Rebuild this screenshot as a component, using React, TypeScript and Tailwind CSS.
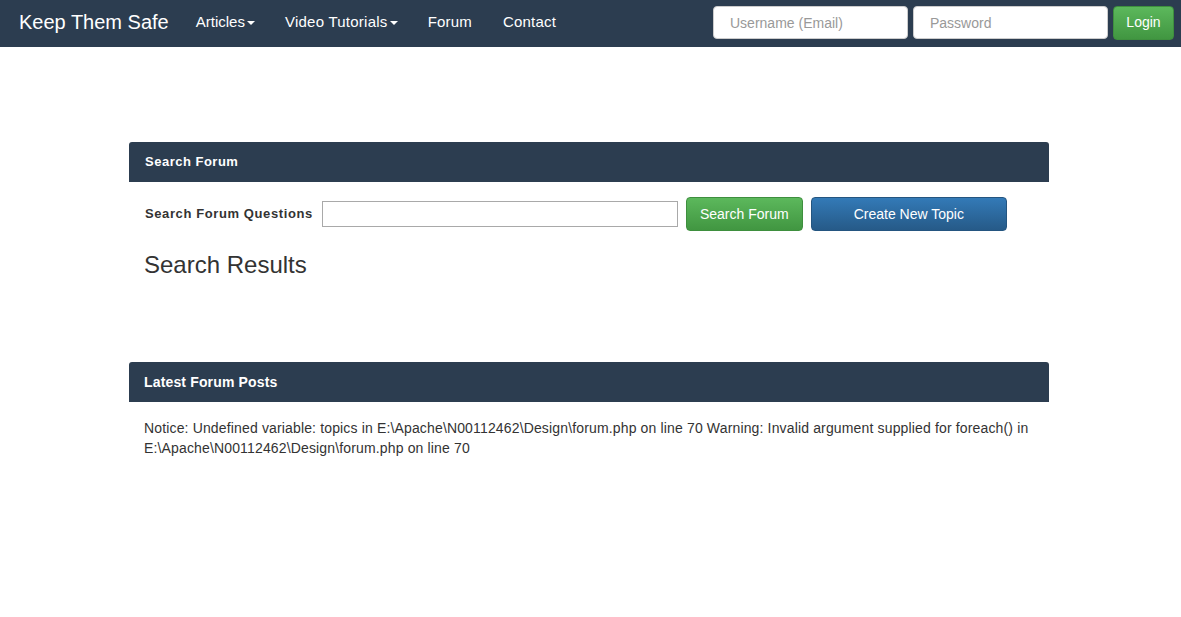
export default function App() {
  const font = { fontFamily: '"Liberation Sans", Arial, sans-serif' };
  return (
    <div className="min-h-[617px] bg-white text-[#333]" style={font}>
      <nav className="h-[47px] bg-[#2c3d50] flex items-center">
        <div className="pl-[19px] pr-[27px] text-[20px] text-white leading-none -mt-[3px]">Keep Them Safe</div>
        <div className="flex items-center text-[15px] text-white -mt-[3px]">
          <span className="flex items-center pr-[30px]">
            Articles
            <span className="ml-[2px] mt-[2px] w-0 h-0 border-l-[4px] border-r-[4px] border-t-[4px] border-l-transparent border-r-transparent border-t-white" />
          </span>
          <span className="flex items-center pr-[30px] tracking-[0.25px]">
            Video Tutorials
            <span className="ml-[2px] mt-[2px] w-0 h-0 border-l-[4px] border-r-[4px] border-t-[4px] border-l-transparent border-r-transparent border-t-white" />
          </span>
          <span className="pr-[31px] tracking-[0.2px]">Forum</span>
          <span className="tracking-[0.2px]">Contact</span>
        </div>
        <div className="ml-auto flex items-center gap-[5px] pr-[7px] -mt-[2px]">
          <input
            placeholder="Username (Email)"
            className="w-[195px] h-[33px] rounded-[4px] bg-white border border-[#ccc] px-[16px] text-[14px] placeholder:text-[#999] outline-none"
            style={font}
          />
          <input
            placeholder="Password"
            className="w-[195px] h-[33px] rounded-[4px] bg-white border border-[#ccc] px-[16px] text-[14px] placeholder:text-[#999] outline-none"
            style={font}
          />
          <button
            className="w-[61px] h-[34px] rounded-[4px] bg-gradient-to-b from-[#5cb85c] to-[#419641] border border-[#3e8f3e] text-white text-[14px]"
            style={font}
          >
            Login
          </button>
        </div>
      </nav>

      <div className="w-[920px] ml-[129px] pt-[95px]">
        <div className="h-[40px] bg-[#2c3d50] rounded-t-[3px] flex items-center pl-[16px] text-white text-[13px] font-bold tracking-[0.5px]">
          Search Forum
        </div>
        <div className="px-[16px] pt-[15px]">
          <div className="flex items-center">
            <label className="text-[13px] font-bold text-[#333] tracking-[0.6px]">Search Forum Questions</label>
            <input className="ml-[9px] w-[356px] h-[26px] border border-[#a9a9a9] outline-none" />
            <button className="ml-[8px] w-[117px] h-[34px] rounded-[4px] bg-gradient-to-b from-[#5cb85c] to-[#419641] border border-[#3e8f3e] text-white text-[14px]" style={font}>
              Search Forum
            </button>
            <button className="ml-[8px] w-[196px] h-[34px] rounded-[4px] bg-gradient-to-b from-[#337ab7] to-[#265a88] border border-[#245580] text-white text-[14px]" style={font}>
              Create New Topic
            </button>
          </div>
          <h2 className="mt-[20px] text-[24px] leading-[28px] text-[#333] -ml-px">Search Results</h2>
        </div>

        <div className="mt-[83px] h-[40px] bg-[#2c3d50] rounded-t-[3px] flex items-center pl-[15px] text-white text-[14px] font-bold tracking-[0.15px]">
          Latest Forum Posts
        </div>
        <div className="px-[15px] pt-[16px] text-[14px] leading-[20px] text-[#333] tracking-[0.15px]">
          Notice: Undefined variable: topics in E:\Apache\N00112462\Design\forum.php on line 70 Warning: Invalid argument supplied for foreach() in E:\Apache\N00112462\Design\forum.php on line 70
        </div>
      </div>
    </div>
  );
}
